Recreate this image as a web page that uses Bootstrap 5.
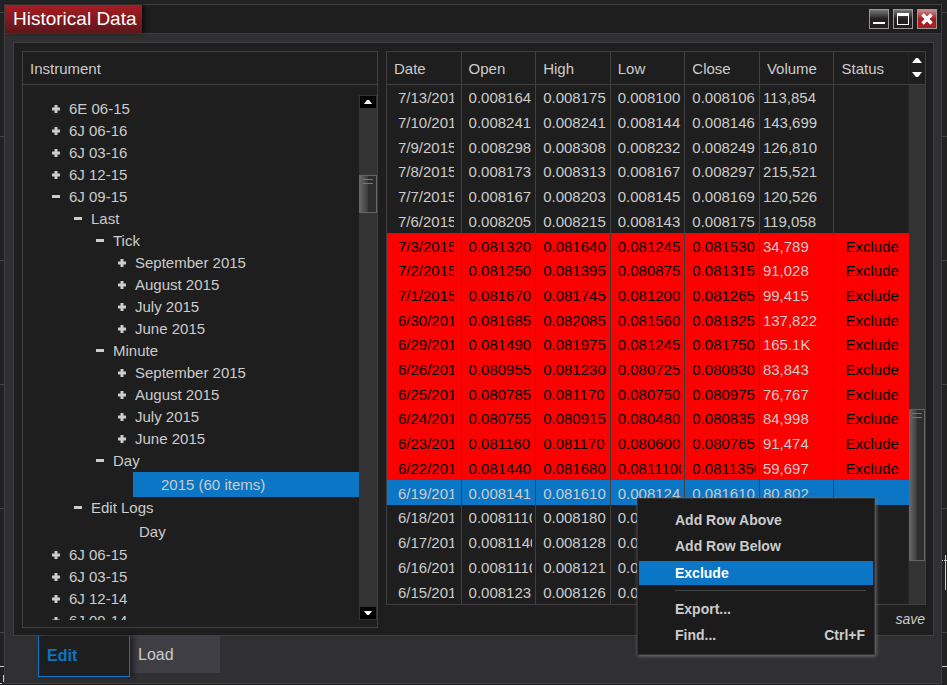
<!DOCTYPE html>
<html lang="en" data-bs-theme="dark">
<head>
<meta charset="utf-8">
<meta name="viewport" content="width=device-width, initial-scale=1">
<title>Historical Data</title>
<link href="https://cdn.jsdelivr.net/npm/bootstrap@5.3.0/dist/css/bootstrap.min.css" rel="stylesheet">
<style>
:root{--line:#3f3f42;--panel:#1e1e1e;--frame:#303032;--ink:#ccc;--accent:#0b76c5}
body{font:15px/22px "Liberation Sans",Arial,sans-serif;color:var(--ink);background:#222;
  background-image:repeating-linear-gradient(#222 0 12px,#444 12px 13px,#222 13px 124px)}
button{font:inherit;color:inherit;border:0;background:none;padding:0}
.desk{padding:4px 5px 1px 4px}
.chart-bit{position:absolute;bottom:0}
.edge{border:1px solid var(--line)}
.win{background:var(--frame);min-height:0}
.titlebar{background:var(--panel);border-bottom:1px solid var(--line);height:29px;padding-right:4px}
.caption{font-size:19px;line-height:28px;color:#fff;padding:0 5px 0 8px;background:linear-gradient(#a81c24,#5c171b);box-shadow:3px 0 4px #0008;margin:0;font-weight:400}
.ctl{width:20px;height:20px;border:1px solid #999;background:linear-gradient(#777,#231f20 50%)}
.ctl.x-close{background:linear-gradient(#c98a8c,#a61e22 50%)}
.ctl svg,.arrow svg{display:block}
.inner{background:var(--panel);margin:8px 7px 0 8px;padding:8px 7px 7px 8px;flex:1 1 0;min-height:0}
.tree-box{width:356px;min-height:0}
.head{height:33px;line-height:34px;padding-left:7px;border-bottom:1px solid var(--line);flex:none}
.tree-body{padding:10px 0 7px;min-height:0;flex:1 1 0}
.tree{overflow:hidden;padding-top:3px;min-height:0;flex:1 1 0}
.tree ul{list-style:none;margin:0;padding-left:22px}
ul.tree{list-style:none;margin:0;padding-left:24px}
.node{height:22px;display:flex;align-items:center;width:100%;text-align:left;white-space:nowrap}
.node svg{margin:0 9px 0 5px;flex:none}
.leaf-item{padding-left:20px}
.leaf{height:25px;padding-left:28px}
.leaf.on{background:var(--accent)}
.bar{background:#333;flex:none}
.arrow{background:#000;height:12px;margin:1px;display:flex;align-items:center;justify-content:center}
.thumb{border:1px solid #666;background:linear-gradient(90deg,#666,#3a3a3a 50%,#2d2d2d 50%);background-clip:padding-box}
.grip{width:10px;height:5px;border:solid #777;border-width:1px 0;margin:3px auto 0}
.side-track{width:18px}
.grid-track{width:16px;flex:none}
table.quotes{table-layout:fixed;width:100%;height:100%;border-collapse:separate;border-spacing:0}
.quotes th{font-weight:400;height:33px;line-height:31px;padding:1px 7px 0;border-bottom:1px solid var(--line);border-right:1px solid var(--line)}
.quotes td{padding:2px 3px 0 7px;border-right:1px solid var(--line);line-height:20px}
.quotes td div{overflow:hidden;white-space:nowrap}
.quotes td:first-child{padding-left:11px;padding-right:7px}
.quotes td:nth-child(6){padding-left:3px}
.quotes td:nth-child(7){padding-left:11px;padding-right:9px}
.quotes tr>:last-child{border-right-color:#262626}
tr.excluded td{background:red;color:#000}
tr.excluded td:nth-child(6){color:var(--ink)}
tr.picked td{background:var(--accent)}
.quotes tr.excluded td:last-child,.quotes tr.picked td:last-child{border-right:0}
.save{font-size:14px;line-height:16px;font-style:italic;margin:6px 1px 1px}
.tabs{padding:0 0 6px 33px;font-size:16px}
.tab-on{width:92px;height:41px;background:var(--panel);border:1px solid var(--accent);border-top:0;color:var(--accent);font-weight:700;text-align:left;padding-left:8px;box-shadow:4px 0 5px #0007;position:relative}
.tab-off{width:90px;height:37px;background:#3e3e44;text-align:left;padding-left:8px}
.menu{position:absolute;right:72px;bottom:30px;width:238px;background:#1b1b1b;border:1px solid #333;box-shadow:1px 1px 4px #777;padding:8px 1px 6px;font-size:14px;font-weight:700}
.menu button{display:flex;justify-content:space-between;align-items:center;width:100%;height:26px;padding:0 8px 0 36px}
.menu button.on{background:var(--accent);color:#fff;height:24px;margin:2px 0 5px}
.menu hr{margin:0 7px 5px 36px;border-top:1px solid #444;opacity:1}
</style>
</head>
<body>
<div class="desk vh-100 d-flex flex-column position-relative">
<svg class="chart-bit start-0" width="4" height="20" aria-hidden="true"><path d="M0 1.500h4M0 18.500h2M3.500 10v7" stroke="#ccc"/></svg>
<svg class="chart-bit end-0" width="5" height="140" aria-hidden="true"><path d="M0 15.500h1M0 121.500h5M2 15.500h3M3.500 10v35" stroke="#ccc"/></svg>
<main class="win edge flex-grow-1 d-flex flex-column">
  <header class="titlebar d-flex justify-content-between flex-shrink-0">
    <h1 class="caption">Historical Data</h1>
    <div class="d-flex gap-1 align-items-center">
      <button class="ctl" aria-label="Minimize"><svg width="18" height="18"><path d="M3 12h12v2H3z" fill="#fff"/></svg></button>
      <button class="ctl" aria-label="Maximize"><svg width="18" height="18"><path d="M3 3h12v12H3zM4 6v8h10V6z" fill="#fff" fill-rule="evenodd"/></svg></button>
      <button class="ctl x-close" aria-label="Close"><svg width="18" height="18"><path d="M4.500 4.500l9 9M13.500 4.500l-9 9" stroke="#fff" stroke-width="3.500"/></svg></button>
    </div>
  </header>
  <div class="inner edge d-flex gap-2">
    <section class="tree-box edge d-flex flex-column flex-shrink-0">
      <div class="head">Instrument</div>
      <div class="tree-body d-flex">
        <ul class="tree" id="tree"></ul>
        <div class="bar side-track d-flex flex-column">
          <button class="arrow" aria-label="Scroll up"><svg width="8" height="4"><path d="M0 4l3-4h2l3 4z" fill="#fff"/></svg></button>
          <div style="flex:66 1 0"></div>
          <div class="thumb" style="height:38px"><div class="grip"></div></div>
          <div style="flex:393 1 0"></div>
          <button class="arrow" aria-label="Scroll down"><svg width="8" height="4"><path d="M0 0l3 4h2l3-4z" fill="#fff"/></svg></button>
        </div>
      </div>
    </section>
    <section class="flex-grow-1 d-flex flex-column">
      <div class="edge flex-grow-1 d-flex">
        <div class="flex-grow-1">
          <table class="quotes">
            <thead><tr><th>Date</th><th>Open</th><th>High</th><th>Low</th><th>Close</th><th>Volume</th><th>Status</th></tr></thead>
            <tbody id="rows"></tbody>
          </table>
        </div>
        <div class="grid-track d-flex flex-column">
          <div class="head p-0 d-flex flex-column align-items-center justify-content-center gap-2">
            <svg width="10" height="6"><path d="M0 5l4-5h2l4 5z" fill="#fff"/></svg>
            <svg width="10" height="6"><path d="M0 0l4 5h2l4-5z" fill="#fff"/></svg>
          </div>
          <div class="bar flex-grow-1 d-flex flex-column">
            <div style="flex:325 1 0"></div>
            <div class="thumb" style="flex:151 1 0"><div class="grip"></div></div>
            <div style="flex:43 1 0"></div>
          </div>
        </div>
      </div>
      <button class="save align-self-end">save</button>
    </section>
  </div>
  <nav class="tabs d-flex align-items-start flex-shrink-0" aria-label="Mode">
    <button class="tab-on">Edit</button>
    <button class="tab-off">Load</button>
  </nav>
</main>
<div class="menu" role="menu">
  <button role="menuitem">Add Row Above</button>
  <button role="menuitem">Add Row Below</button>
  <button role="menuitem" class="on">Exclude</button>
  <hr>
  <button role="menuitem">Export...</button>
  <button role="menuitem">Find...<span>Ctrl+F</span></button>
</div>
</div>
<script src="https://cdn.jsdelivr.net/npm/bootstrap@5.3.0/dist/js/bootstrap.bundle.min.js"></script>
<script>
const months = ['September 2015', 'August 2015', 'July 2015', 'June 2015'];
const data = ['6E 06-15', '6J 06-16', '6J 03-16', '6J 12-15',
  ['6J 09-15', [
    ['Last', [['Tick', months], ['Minute', months], ['Day', [{leaf: '2015 (60 items)', on: true}]]]],
    ['Edit Logs', [{leaf: 'Day'}]]]],
  '6J 06-15', '6J 03-15', '6J 12-14', '6J 09-14'];
const sign = open => `<svg width="8" height="8" aria-hidden="true"><path d="${open ? 'M0 2h8v3H0z' : 'M2.5 0h3v2.500H8v3H5.500V8h-3V5.500H0v-3h2.500z'}" fill="#ccc"/></svg>`;
const item = n => {
  if (n.leaf) return `<li class="leaf-item"><button class="node leaf${n.on ? ' on' : ''}">${n.leaf}</button></li>`;
  const open = Array.isArray(n);
  return `<li><button class="node">${sign(open)}${open ? n[0] : n}</button>${open ? `<ul>${n[1].map(item).join('')}</ul>` : ''}</li>`;
};
document.getElementById('tree').innerHTML = data.map(item).join('');

const quotes = `7/13/2015|0.008164|0.008175|0.008100|0.008106|113,854
7/10/2015|0.008241|0.008241|0.008144|0.008146|143,699
7/9/2015|0.008298|0.008308|0.008232|0.008249|126,810
7/8/2015|0.008173|0.008313|0.008167|0.008297|215,521
7/7/2015|0.008167|0.008203|0.008145|0.008169|120,526
7/6/2015|0.008205|0.008215|0.008143|0.008175|119,058
7/3/2015|0.081320|0.081640|0.081245|0.081530|34,789|Exclude
7/2/2015|0.081250|0.081395|0.080875|0.081315|91,028|Exclude
7/1/2015|0.081670|0.081745|0.081200|0.081265|99,415|Exclude
6/30/2015|0.081685|0.082085|0.081560|0.081825|137,822|Exclude
6/29/2015|0.081490|0.081975|0.081245|0.081750|165.1K|Exclude
6/26/2015|0.080955|0.081230|0.080725|0.080830|83,843|Exclude
6/25/2015|0.080785|0.081170|0.080750|0.080975|76,767|Exclude
6/24/2015|0.080755|0.080915|0.080480|0.080835|84,998|Exclude
6/23/2015|0.081160|0.081170|0.080600|0.080765|91,474|Exclude
6/22/2015|0.081440|0.081680|0.0811100|0.0811350|59,697|Exclude
6/19/2015|0.008141|0.081610|0.008124|0.081610|80,802
6/18/2015|0.0081110|0.008180|0.008110
6/17/2015|0.0081140|0.008128|0.008110
6/16/2015|0.0081110|0.008121|0.008110
6/15/2015|0.008123|0.008126|0.008110`.split('\n').map(r => r.split('|'));
document.getElementById('rows').innerHTML = quotes.map(r => {
  const kind = r[6] ? 'excluded' : r[0] === '6/19/2015' ? 'picked' : '';
  return `<tr class="${kind}">${[0, 1, 2, 3, 4, 5, 6].map(i => `<td><div>${r[i] || ''}</div></td>`).join('')}</tr>`;
}).join('');
</script>
</body>
</html>
